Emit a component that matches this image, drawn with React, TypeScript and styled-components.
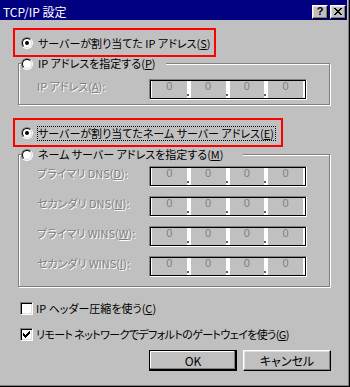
import React from 'react';
import styled, { createGlobalStyle, css } from 'styled-components';

const GlobalStyle = createGlobalStyle`
  html, body {
    margin: 0;
    padding: 0;
    background: #c0c0c0;
  }
  body {
    font-family: 'Noto Sans CJK JP', 'Liberation Sans', sans-serif;
    font-size: 11px;
    line-height: 13px;
    color: #000;
    font-feature-settings: 'palt';
  }
  u {
    text-underline-offset: 1px;
  }
`;

const Window = styled.div`
  width: 350px;
  height: 387px;
  box-sizing: border-box;
  background: #c0c0c0;
  border-right: 1px solid #000;
  border-bottom: 1px solid #000;
  box-shadow: inset -1px -1px #808080;
  padding: 0 2px 2px 0;
  display: flex;
  flex-direction: column;
`;

const TitleBar = styled.div`
  height: 20px;
  box-sizing: border-box;
  padding: 3px 1px 0 3px;
  display: flex;
  align-items: center;
  background: #000080;
  color: #fff;
  font-size: 12px;
`;

const Title = styled.span`
  flex: 1;
`;

const CaptionButtons = styled.div`
  display: flex;
  gap: 2px;
`;

const CaptionButton = styled.span`
  width: 16px;
  height: 14px;
  box-sizing: border-box;
  background: #c0c0c0;
  border: 1px solid;
  border-color: #fff #000 #000 #fff;
  box-shadow: inset -1px -1px #808080, inset 1px 1px #dfdfdf;
  display: flex;
  align-items: center;
  justify-content: center;
  font: bold 11px/11px 'Liberation Sans', sans-serif;
  color: #000;
`;

const Body = styled.div`
  display: flex;
  flex-direction: column;
  align-items: flex-start;
  padding-left: 13px;
`;

const Highlight = styled.div<{ $width: number; $gap: number }>`
  width: ${(p) => p.$width}px;
  height: 29px;
  box-sizing: border-box;
  margin-top: ${(p) => p.$gap}px;
  border: 2px solid #ff0000;
  padding: 1px 0 0 6px;
  display: flex;
  align-items: center;
`;

const Option = styled.label`
  display: flex;
  align-items: center;
  gap: 5px;
  white-space: nowrap;
`;

const RadioOuter = styled.span`
  width: 12px;
  height: 12px;
  box-sizing: border-box;
  flex-shrink: 0;
  border-radius: 50%;
  border: 1px solid;
  border-color: #808080 #fff #fff #808080;
  display: flex;
  align-items: center;
  justify-content: center;
`;

const RadioInner = styled.span`
  width: 10px;
  height: 10px;
  box-sizing: border-box;
  border-radius: 50%;
  border: 1px solid;
  border-color: #000 #dfdfdf #dfdfdf #000;
  background: #fff;
  display: flex;
  align-items: center;
  justify-content: center;
`;

const RadioDot = styled.span`
  width: 4px;
  height: 4px;
  border-radius: 50%;
  background: #000;
`;

const Focus = styled.span`
  border: 1px dotted #000;
  margin-left: -1px;
  padding-right: 1px;
  line-height: 13px;
`;

const Group = styled.fieldset<{ $gap: number; $top: number; $bottom: number }>`
  margin: ${(p) => p.$gap}px 0 0 5px;
  width: 312px;
  min-width: 0;
  box-sizing: border-box;
  border: 1px solid #808080;
  box-shadow: inset 1px 1px #fff, 1px 1px #fff;
  padding: ${(p) => p.$top}px 0 ${(p) => p.$bottom}px 0;
  display: flex;
  flex-direction: column;
  gap: 9px;
`;

const Legend = styled.legend<{ $width: number }>`
  width: ${(p) => p.$width}px;
  height: 13px;
  box-sizing: border-box;
  margin-left: 2px;
  padding: 0;
  background: #c0c0c0;
  display: flex;
  align-items: center;
`;

const FieldRow = styled.div`
  display: grid;
  grid-template-columns: 112px 158px;
  align-items: start;
  padding-left: 18px;
`;

const FieldLabel = styled.span`
  color: #808080;
  text-shadow: 1px 1px #fff;
  line-height: 14px;
  white-space: nowrap;
`;

const IpField = styled.div`
  width: 158px;
  height: 21px;
  box-sizing: border-box;
  background: #fff;
  border: 1px solid;
  border-color: #808080 #fff #fff #808080;
  box-shadow: inset 1px 1px #000, inset -1px -1px #000;
  padding: 1px 3px 1px 2px;
  display: flex;
`;

const Octet = styled.span`
  flex: 1;
  background: #c0c0c0;
  color: #808080;
  font: 11px/11px 'Liberation Sans', sans-serif;
  text-align: center;
`;

const Separator = styled.span`
  width: 4px;
  display: flex;
  align-items: flex-end;
  padding-bottom: 2px;
  box-sizing: border-box;
`;

const Dot = styled.span`
  width: 2px;
  height: 2px;
  background: #606060;
`;

const CheckRow = styled.label<{ $gap: number; $tight?: boolean }>`
  height: 14px;
  margin: ${(p) => p.$gap}px 0 0 7px;
  display: flex;
  align-items: center;
  gap: 3px;
  white-space: nowrap;
  letter-spacing: ${(p) => (p.$tight ? '-0.6px' : '0')};
`;

const CheckBox = styled.span`
  width: 13px;
  height: 13px;
  box-sizing: border-box;
  flex-shrink: 0;
  background: #fff;
  border: 1px solid;
  border-color: #808080 #fff #fff #808080;
  box-shadow: inset 1px 1px #000, inset -1px -1px #dfdfdf;
  display: flex;
  align-items: center;
  justify-content: center;
`;

const ButtonRow = styled.div`
  align-self: stretch;
  display: flex;
  justify-content: flex-end;
  gap: 6px;
  margin-top: 9px;
  padding-right: 16px;
`;

const Button = styled.button<{ $default?: boolean }>`
  width: 88px;
  height: 21px;
  box-sizing: border-box;
  margin: 0;
  padding: 0;
  font: inherit;
  font-size: 12px;
  color: #000;
  background: #c0c0c0;
  ${(p) =>
    p.$default
      ? css`
          border: 1px solid #000;
          box-shadow: inset -1px -1px #000, inset -2px -2px #808080, inset 1px 1px #fff;
        `
      : css`
          border: 1px solid;
          border-color: #fff #000 #000 #fff;
          box-shadow: inset -1px -1px #808080, inset 1px 1px #dfdfdf;
        `}
`;

const Hotkey = ({ text, k, tail = '' }: { text: string; k: string; tail?: string }) => (
  <>
    {text}(<u>{k}</u>){tail}
  </>
);

const Radio = ({ checked }: { checked?: boolean }) => (
  <RadioOuter>
    <RadioInner>{checked && <RadioDot />}</RadioInner>
  </RadioOuter>
);

const pixels = (rows: string[]) =>
  rows.flatMap((row, y) =>
    row.split('').map((c, x) => (c === '#' ? <rect key={`${x}-${y}`} x={x} y={y} width={1} height={1} /> : null))
  );

const CloseGlyph = () => (
  <svg width="8" height="7" viewBox="0 0 8 7" shapeRendering="crispEdges" fill="#000">
    {pixels(['##....##', '.##..##.', '..####..', '...##...', '..####..', '.##..##.', '##....##'])}
  </svg>
);

const CheckGlyph = () => (
  <svg width="7" height="7" viewBox="0 0 7 7" shapeRendering="crispEdges" fill="#000">
    {pixels(['......#', '.....##', '#...###', '##.###.', '#####..', '.###...', '..#....'])}
  </svg>
);

const IpAddress = () => (
  <IpField>
    <Octet>0</Octet>
    <Separator>
      <Dot />
    </Separator>
    <Octet>0</Octet>
    <Separator>
      <Dot />
    </Separator>
    <Octet>0</Octet>
    <Separator>
      <Dot />
    </Separator>
    <Octet>0</Octet>
  </IpField>
);

const serverRows = [
  { text: 'プライマリ DNS', k: 'D' },
  { text: 'セカンダリ DNS', k: 'N' },
  { text: 'プライマリ WINS', k: 'W' },
  { text: 'セカンダリ WINS', k: 'I' },
];

export default function App() {
  return (
    <>
      <GlobalStyle />
      <Window>
        <TitleBar>
          <Title>TCP/IP 設定</Title>
          <CaptionButtons>
            <CaptionButton>?</CaptionButton>
            <CaptionButton>
              <CloseGlyph />
            </CaptionButton>
          </CaptionButtons>
        </TitleBar>
        <Body>
          <Highlight $width={203} $gap={8}>
            <Option>
              <Radio checked />
              <span>
                <Hotkey text="サーバーが割り当てた IP アドレス" k="S" />
              </span>
            </Option>
          </Highlight>
          <Group $gap={0} $top={9} $bottom={4}>
            <Legend $width={145}>
              <Option>
                <Radio />
                <span>
                  <Hotkey text="IP アドレスを指定する" k="P" />
                </span>
              </Option>
            </Legend>
            <FieldRow>
              <FieldLabel>
                <Hotkey text="IP アドレス" k="A" tail=":" />
              </FieldLabel>
              <IpAddress />
            </FieldRow>
          </Group>
          <Highlight $width={270} $gap={13}>
            <Option>
              <Radio checked />
              <Focus>
                <Hotkey text="サーバーが割り当てたネーム サーバー アドレス" k="E" />
              </Focus>
            </Option>
          </Highlight>
          <Group $gap={1} $top={5} $bottom={9}>
            <Legend $width={222}>
              <Option>
                <Radio />
                <span>
                  <Hotkey text="ネーム サーバー アドレスを指定する" k="M" />
                </span>
              </Option>
            </Legend>
            {serverRows.map((row) => (
              <FieldRow key={row.k}>
                <FieldLabel>
                  <Hotkey text={row.text} k={row.k} tail=":" />
                </FieldLabel>
                <IpAddress />
              </FieldRow>
            ))}
          </Group>
          <CheckRow $gap={14}>
            <CheckBox />
            <span>
              <Hotkey text="IP ヘッダー圧縮を使う" k="C" />
            </span>
          </CheckRow>
          <CheckRow $gap={12} $tight>
            <CheckBox>
              <CheckGlyph />
            </CheckBox>
            <span>
              <Hotkey text="リモート ネットワークでデフォルトのゲートウェイを使う" k="G" />
            </span>
          </CheckRow>
          <ButtonRow>
            <Button $default>OK</Button>
            <Button>キャンセル</Button>
          </ButtonRow>
        </Body>
      </Window>
    </>
  );
}
